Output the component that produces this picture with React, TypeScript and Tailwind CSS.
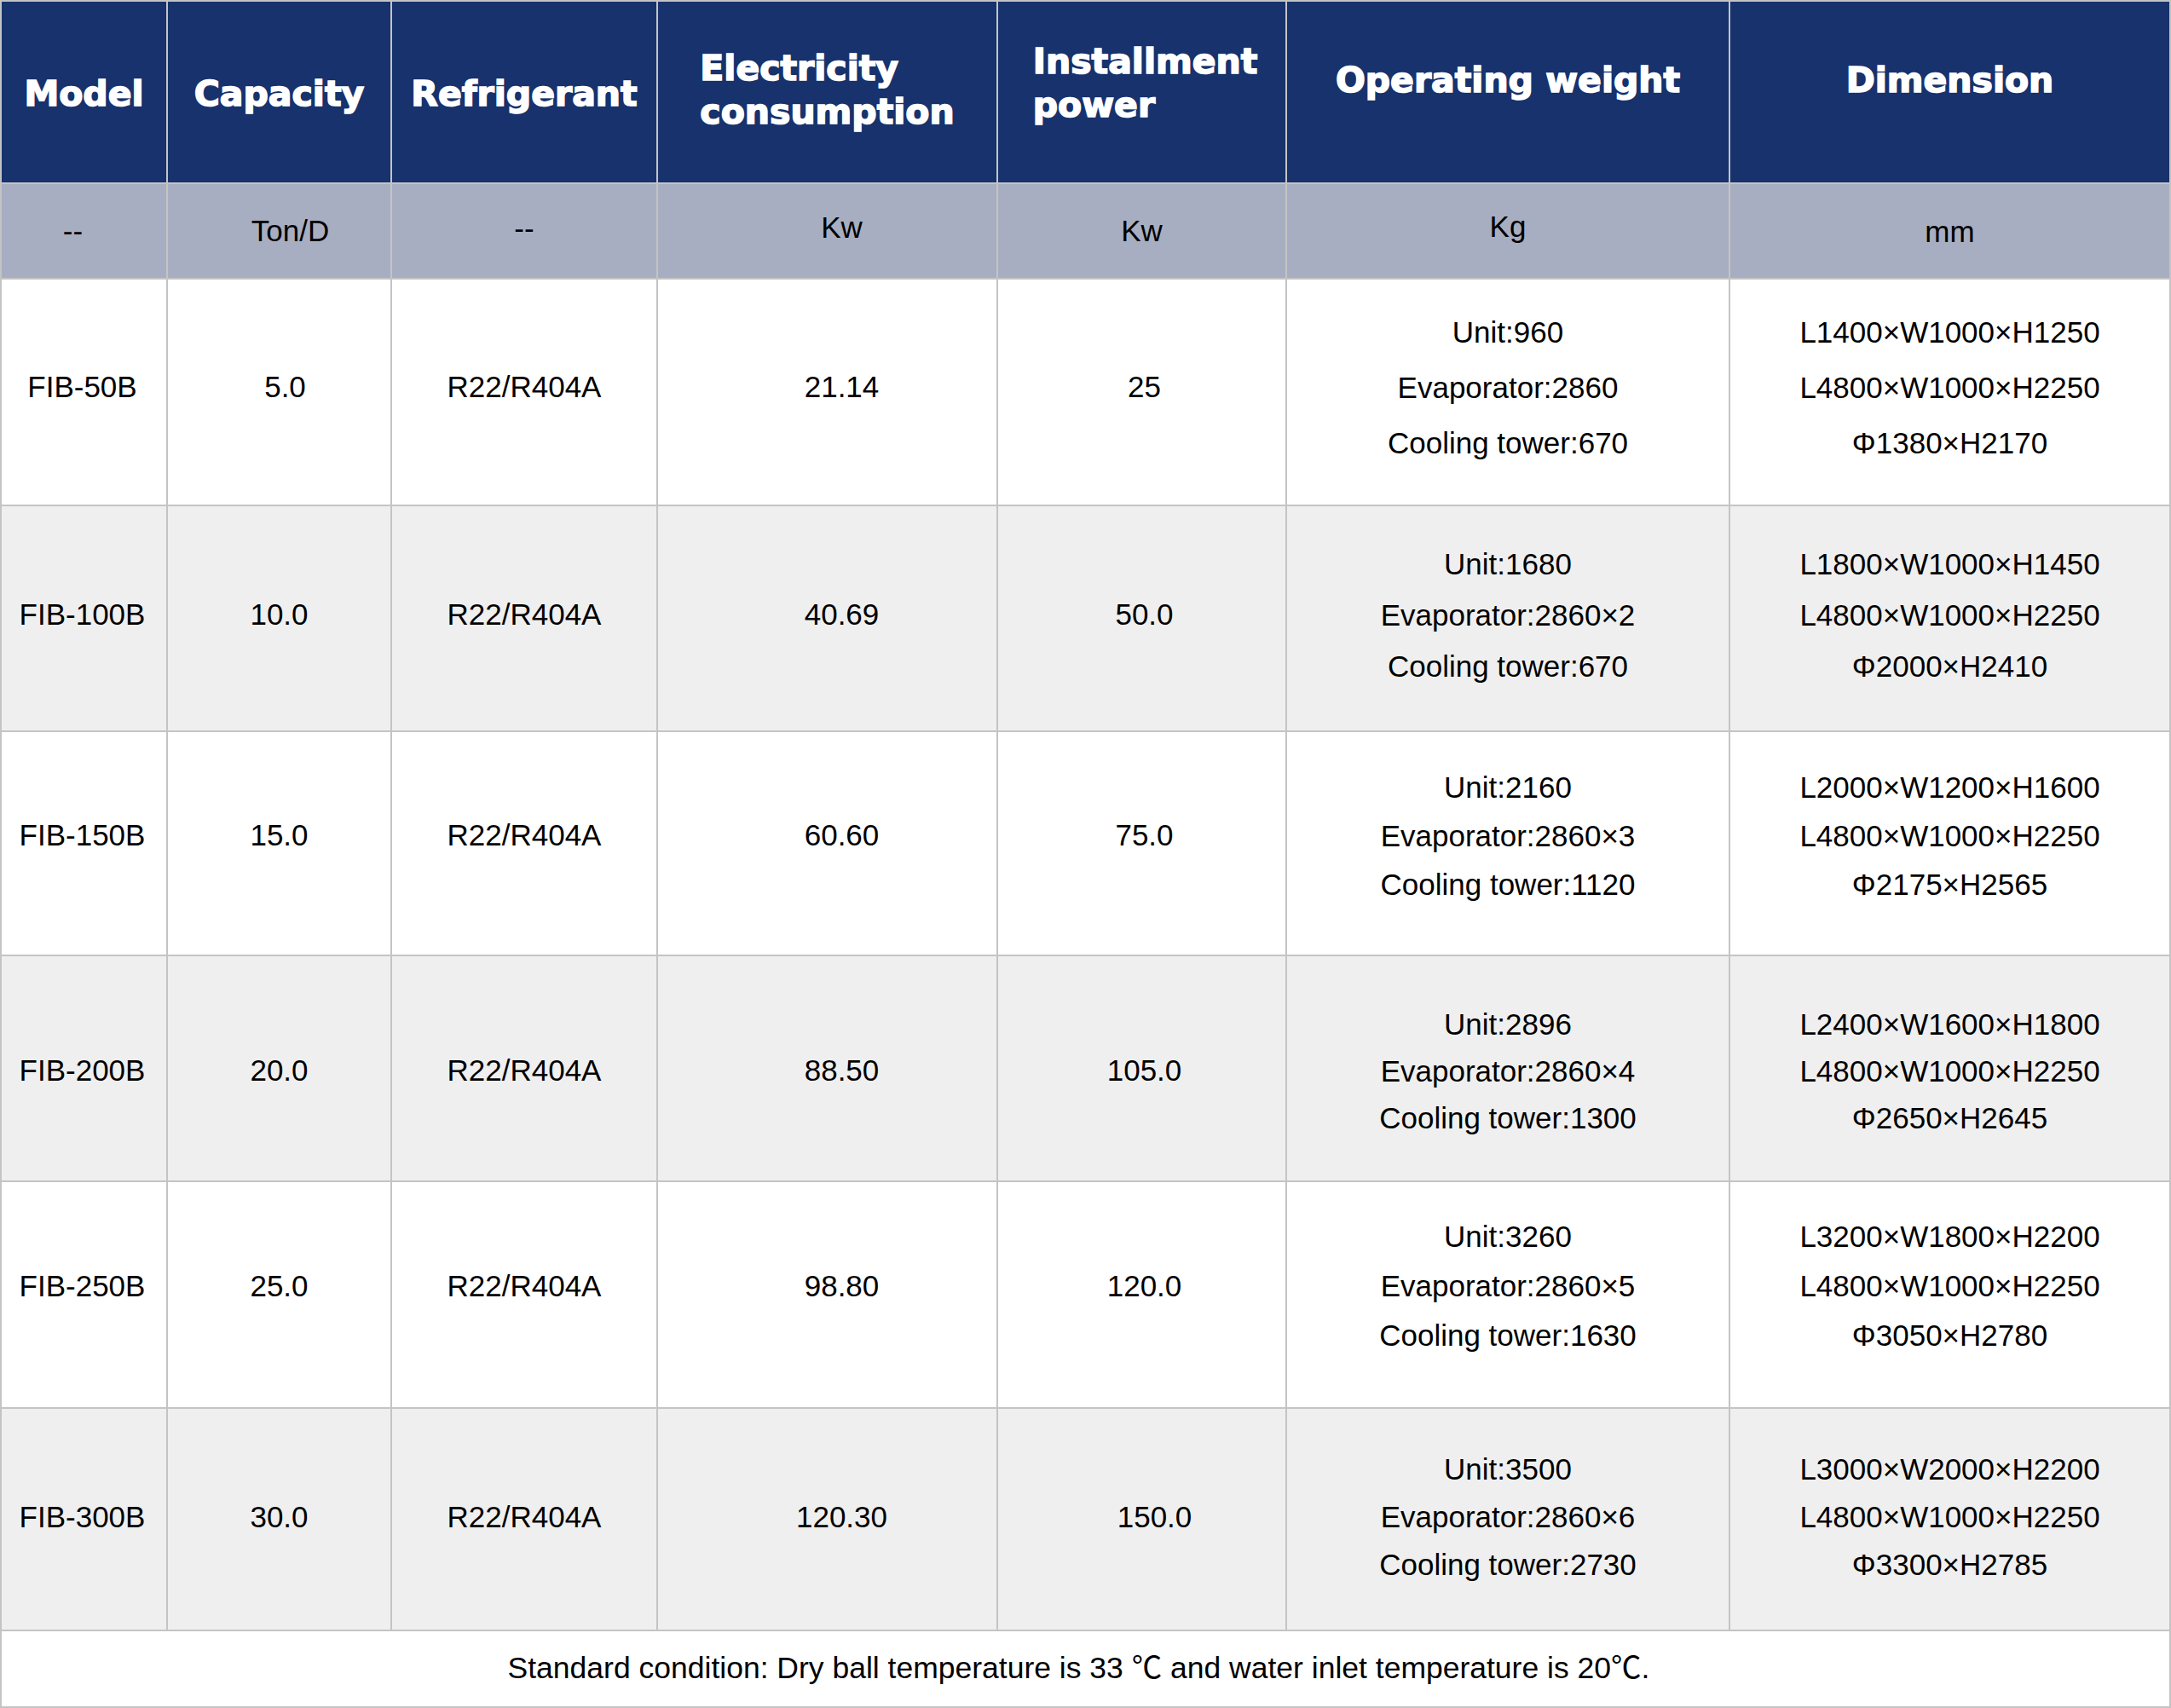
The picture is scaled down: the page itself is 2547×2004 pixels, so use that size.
import React from "react";

type Row = {
  model: string;
  capacity: string;
  refrigerant: string;
  power: string;
  install: string;
  weight: string[];
  dimension: string[];
  lead: string;
  shift: string;
  bg: string;
  capPad?: string;
  instPad?: string;
};

const rows: Row[] = [
  {
    model: "FIB-50B",
    capacity: "5.0",
    refrigerant: "R22/R404A",
    power: "21.14",
    install: "25",
    weight: ["Unit:960", "Evaporator:2860", "Cooling tower:670"],
    dimension: ["L1400×W1000×H1250", "L4800×W1000×H2250", "Φ1380×H2170"],
    lead: "leading-[65px]",
    shift: "pb-[11px]",
    bg: "bg-white",
    capPad: "pl-[14px]",
  },
  {
    model: "FIB-100B",
    capacity: "10.0",
    refrigerant: "R22/R404A",
    power: "40.69",
    install: "50.0",
    weight: ["Unit:1680", "Evaporator:2860×2", "Cooling tower:670"],
    dimension: ["L1800×W1000×H1450", "L4800×W1000×H2250", "Φ2000×H2410"],
    lead: "leading-[60px]",
    shift: "pb-[8px]",
    bg: "bg-[#efefef]",
  },
  {
    model: "FIB-150B",
    capacity: "15.0",
    refrigerant: "R22/R404A",
    power: "60.60",
    install: "75.0",
    weight: ["Unit:2160", "Evaporator:2860×3", "Cooling tower:1120"],
    dimension: ["L2000×W1200×H1600", "L4800×W1000×H2250", "Φ2175×H2565"],
    lead: "leading-[57px]",
    shift: "pb-[18px]",
    bg: "bg-white",
  },
  {
    model: "FIB-200B",
    capacity: "20.0",
    refrigerant: "R22/R404A",
    power: "88.50",
    install: "105.0",
    weight: ["Unit:2896", "Evaporator:2860×4", "Cooling tower:1300"],
    dimension: ["L2400×W1600×H1800", "L4800×W1000×H2250", "Φ2650×H2645"],
    lead: "leading-[55px]",
    shift: "pt-[5px]",
    bg: "bg-[#efefef]",
  },
  {
    model: "FIB-250B",
    capacity: "25.0",
    refrigerant: "R22/R404A",
    power: "98.80",
    install: "120.0",
    weight: ["Unit:3260", "Evaporator:2860×5", "Cooling tower:1630"],
    dimension: ["L3200×W1800×H2200", "L4800×W1000×H2250", "Φ3050×H2780"],
    lead: "leading-[58px]",
    shift: "pb-[20px]",
    bg: "bg-white",
  },
  {
    model: "FIB-300B",
    capacity: "30.0",
    refrigerant: "R22/R404A",
    power: "120.30",
    install: "150.0",
    weight: ["Unit:3500", "Evaporator:2860×6", "Cooling tower:2730"],
    dimension: ["L3000×W2000×H2200", "L4800×W1000×H2250", "Φ3300×H2785"],
    lead: "leading-[56px]",
    shift: "pb-[5px]",
    bg: "bg-[#efefef]",
    instPad: "pl-[30px]",
  },
];

// unit row, with the small nudges the source sheet has
const units = [
  { t: "--", c: "pr-[26px]" },
  { t: "Ton/D", c: "pl-[26px]" },
  { t: "--", c: "pb-[6px]" },
  { t: "Kw", c: "pl-[34px] pb-[8px]" },
  { t: "Kw", c: "" },
  { t: "Kg", c: "pb-[10px]" },
  { t: "mm", c: "pt-[2px]" },
];

const Head = ({ children, className = "" }: { children: React.ReactNode; className?: string }) => (
  <div className={`flex items-center justify-center bg-[#17326c] text-white ${className}`}>
    {children}
  </div>
);

const Cell = ({ children, className = "" }: { children: React.ReactNode; className?: string }) => (
  <div className={`flex items-center justify-center text-center text-black ${className}`}>{children}</div>
);

const App = () => {
  return (
    <div className="w-[2547px] h-[2004px] bg-[#c4c4c4] p-[2px] grid gap-[2px] grid-cols-[193px_261px_310px_397px_337px_518px_515px] grid-rows-[212px_110px_264px_263px_261px_263px_264px_259px_88px] font-['Liberation_Sans','Noto_Sans_CJK_SC',sans-serif] text-[35px]">
      {/* header */}
      <div className="contents font-['DejaVu_Sans',sans-serif] font-bold text-[41px] leading-[51px] [-webkit-text-stroke:1.6px_white]">
        <Head className="pt-[4px]">Model</Head>
        <Head className="pt-[4px]">Capacity</Head>
        <Head className="pt-[4px]">Refrigerant</Head>
        <Head className="pb-[4px]">
          <div className="text-left">
            Electricity
            <br />
            consumption
          </div>
        </Head>
        <Head className="pb-[20px] pl-[8px]">
          <div className="text-left">
            Installment
            <br />
            power
          </div>
        </Head>
        <Head className="pb-[28px]">Operating weight</Head>
        <Head className="pb-[28px]">Dimension</Head>
      </div>

      {/* units */}
      {units.map((u, i) => (
        <Cell key={i} className={`bg-[#a8aec1] ${u.c}`}>
          {u.t}
        </Cell>
      ))}

      {/* data rows */}
      {rows.map((r) => (
        <React.Fragment key={r.model}>
          <Cell className={`${r.bg} ${r.shift} pr-[4px]`}>{r.model}</Cell>
          <Cell className={`${r.bg} ${r.shift} ${r.capPad ?? ""}`}>{r.capacity}</Cell>
          <Cell className={`${r.bg} ${r.shift}`}>{r.refrigerant}</Cell>
          <Cell className={`${r.bg} ${r.shift} pl-[34px]`}>{r.power}</Cell>
          <Cell className={`${r.bg} ${r.shift} ${r.instPad ?? "pl-[6px]"}`}>{r.install}</Cell>
          <Cell className={`${r.bg} ${r.shift}`}>
            <div className={r.lead}>
              {r.weight.map((w) => (
                <div key={w}>{w}</div>
              ))}
            </div>
          </Cell>
          <Cell className={`${r.bg} ${r.shift}`}>
            <div className={r.lead}>
              {r.dimension.map((d) => (
                <div key={d}>{d}</div>
              ))}
            </div>
          </Cell>
        </React.Fragment>
      ))}

      {/* footer note */}
      <Cell className="col-span-7 bg-white pr-[16px] text-[35.5px]">
        Standard condition: Dry ball temperature is 33 ℃ and water inlet temperature is 20℃.
      </Cell>
    </div>
  );
};

export default App;
